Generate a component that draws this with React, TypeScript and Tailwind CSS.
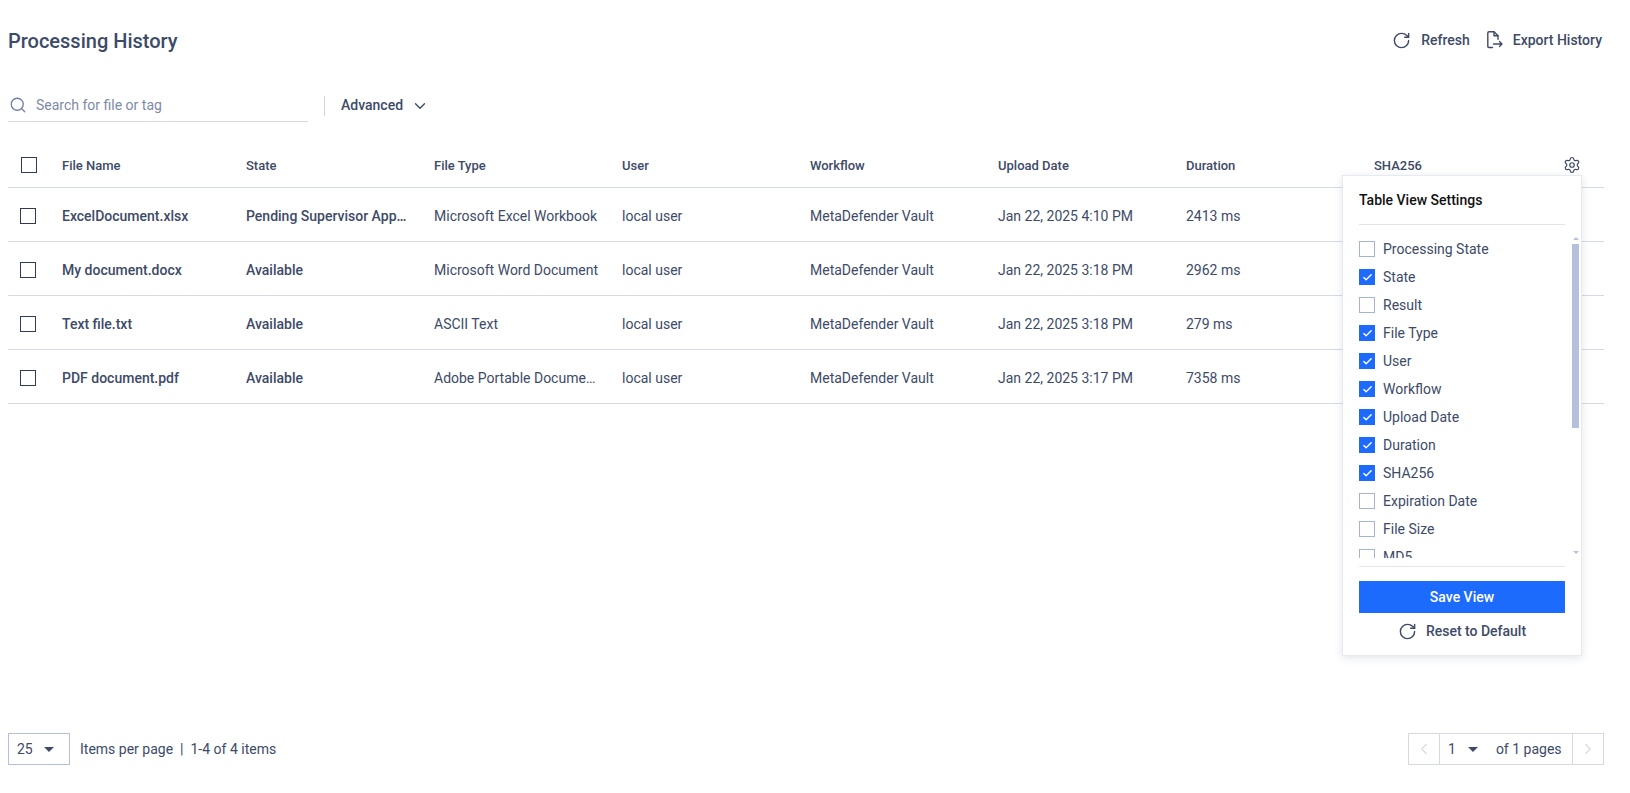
import React from "react";
import { ChevronDown, ChevronLeft, ChevronRight, RotateCw, Search, Settings, Check } from "lucide-react";

const columns = ["File Name", "State", "File Type", "User", "Workflow", "Upload Date", "Duration", "SHA256"];
const rows = [
  ["ExcelDocument.xlsx", "Pending Supervisor Approval", "Microsoft Excel Workbook", "local user", "MetaDefender Vault", "Jan 22, 2025 4:10 PM", "2413 ms"],
  ["My document.docx", "Available", "Microsoft Word Document", "local user", "MetaDefender Vault", "Jan 22, 2025 3:18 PM", "2962 ms"],
  ["Text file.txt", "Available", "ASCII Text", "local user", "MetaDefender Vault", "Jan 22, 2025 3:18 PM", "279 ms"],
  ["PDF document.pdf", "Available", "Adobe Portable Document Format", "local user", "MetaDefender Vault", "Jan 22, 2025 3:17 PM", "7358 ms"],
];
const settings: [string, boolean][] = [
  ["Processing State", false], ["State", true], ["Result", false], ["File Type", true], ["User", true], ["Workflow", true],
  ["Upload Date", true], ["Duration", true], ["SHA256", true], ["Expiration Date", false], ["File Size", false], ["MD5", false],
];

function Caret() {
  return <span className="w-0 h-0 border-l-[5px] border-r-[5px] border-t-[5px] border-l-transparent border-r-transparent border-t-[#3d4a68]" />;
}

function ExportIcon() {
  return (
    <svg width="16" height="18" viewBox="0 0 16 18" fill="none" stroke="#3d4a68" strokeWidth="1.4" strokeLinecap="round" strokeLinejoin="round">
      <path d="M5.5 16.5H2a1.2 1.2 0 0 1-1.2-1.2V2A1.2 1.2 0 0 1 2 .8h5l4 4v3.5" />
      <path d="M7 .8v4h4" />
      <path d="M6.5 13h8.5M12.5 10.5 15 13l-2.5 2.5" />
    </svg>
  );
}

export default function App() {
  return (
    <div className="relative h-[793px] w-full overflow-hidden bg-white pl-2 pr-[26px] text-[14px] text-[#3d4a68] font-['Roboto',sans-serif]">
      <header className="flex h-[80px] items-center justify-between">
        <h1 className="pt-[2px] text-[20px] font-medium text-[#3d4a68]">Processing History</h1>
        <div className="flex items-center font-medium text-[14px]">
          <RotateCw size={19} strokeWidth={1.8} className="mr-[10px]" />
          <span className="mr-[17px]">Refresh</span>
          <ExportIcon />
          <span className="ml-[10px] mr-[2px]">Export History</span>
        </div>
      </header>

      <div className="flex h-[42px] items-center">
        <div className="flex h-[42px] w-[300px] items-center border-b border-[#d5d9e6] pt-[9px]">
          <Search size={18} strokeWidth={1.7} className="ml-px text-[#6f7fa8]" />
          <span className="ml-[9px] text-[#7d89a8]">Search for file or tag</span>
        </div>
        <div className="ml-4 mt-[10px] h-5 w-px bg-[#cfd5e5]" />
        <div className="ml-4 mt-[9px] flex items-center font-medium">
          Advanced
          <ChevronDown size={18} strokeWidth={1.8} className="ml-2" />
        </div>
      </div>

      <div className="mt-[21px]">
        <div className="grid h-[45px] grid-cols-[54px_184px_repeat(6,188px)_188px_1fr] items-center border-b border-[#d5d9e6] text-[13px] font-medium">
          <span className="ml-[13px] block h-4 w-4 border border-[#2f3b5c]" />
          {columns.map((c) => <span key={c} className="pt-[2px]">{c}</span>)}
          <span className="flex pl-px"><Settings size={18} strokeWidth={1.6} /></span>
        </div>
        {rows.map((r) => (
          <div key={r[0]} className="grid h-[54px] grid-cols-[54px_184px_repeat(6,188px)_188px_1fr] items-center border-b border-[#d5d9e6] pt-[3px]">
            <span className="ml-3 block h-4 w-4 border border-[#2f3b5c]" />
            {r.map((v, i) => (
              <span key={i} className={`truncate ${i === 1 ? "pr-[26px]" : "pr-[22px]"} ${i < 2 ? "font-medium" : ""}`}>{v}</span>
            ))}
            <span />
            <span />
          </div>
        ))}
      </div>

      <footer className="absolute bottom-[28px] left-2 right-[26px] flex h-[32px] items-center justify-between">
        <div className="flex items-center">
          <div className="flex h-[32px] w-[62px] items-center border border-[#b5c1dc] pl-2">
            <span>25</span>
            <span className="ml-[11px] flex"><Caret /></span>
          </div>
          <span className="ml-[10px]">Items per page</span>
          <span className="mx-[7px]">|</span>
          <span>1-4 of 4 items</span>
        </div>
        <div className="flex h-[32px] items-center border border-[#d5d9e6]">
          <span className="flex h-full w-[31px] items-center justify-center border-r border-[#d5d9e6]"><ChevronLeft size={18} strokeWidth={1.5} className="text-[#d5d9e6]" /></span>
          <div className="flex w-[132px] items-center pl-2">
            <span>1</span>
            <span className="ml-[12px] flex"><Caret /></span>
            <span className="ml-[18px]">of 1 pages</span>
          </div>
          <span className="flex h-full w-[31px] items-center justify-center border-l border-[#d5d9e6]"><ChevronRight size={18} strokeWidth={1.5} className="text-[#d5d9e6]" /></span>
        </div>
      </footer>

      <div className="absolute left-[1342px] top-[175px] flex h-[481px] w-[240px] flex-col border border-[#e8eaf2] bg-white px-4 shadow-[0_2px_8px_rgba(61,74,104,0.15)]">
        <div className="flex h-[49px] items-center border-b border-[#e3e5ec] pt-[1px] text-[14px] font-medium text-[#111]">Table View Settings</div>
        <div className="mt-[10px] h-[323px] overflow-hidden">
          {settings.map(([label, on]) => (
            <div key={label} className="flex h-[28px] items-center">
              {on ? (
                <span className="flex h-4 w-4 items-center justify-center bg-[#1d6bfc]"><Check size={11} strokeWidth={3} className="text-white" /></span>
              ) : (
                <span className="h-4 w-4 border border-[#a4b2d4]" />
              )}
              <span className="ml-2">{label}</span>
            </div>
          ))}
        </div>
        <div className="mt-2 border-t border-[#e3e5ec] pt-[14px]">
          <div className="flex h-8 items-center justify-center bg-[#1d6bfc] font-medium text-white">Save View</div>
          <div className="mt-[8px] flex items-center justify-center font-medium">
            <RotateCw size={19} strokeWidth={1.8} className="mr-[9px]" />
            Reset to Default
          </div>
        </div>
        <div className="absolute right-[2px] top-[61px] flex h-[317px] w-[7px] flex-col items-center">
          <span className="h-0 w-0 border-x-[3px] border-b-[3px] border-x-transparent border-b-[#b5c1dc]" />
          <span className="mt-[4px] h-[184px] w-[7px] bg-[#b5c1dc]" />
          <span className="mt-auto h-0 w-0 border-x-[3px] border-t-[3px] border-x-transparent border-t-[#b5c1dc]" />
        </div>
      </div>
    </div>
  );
}
